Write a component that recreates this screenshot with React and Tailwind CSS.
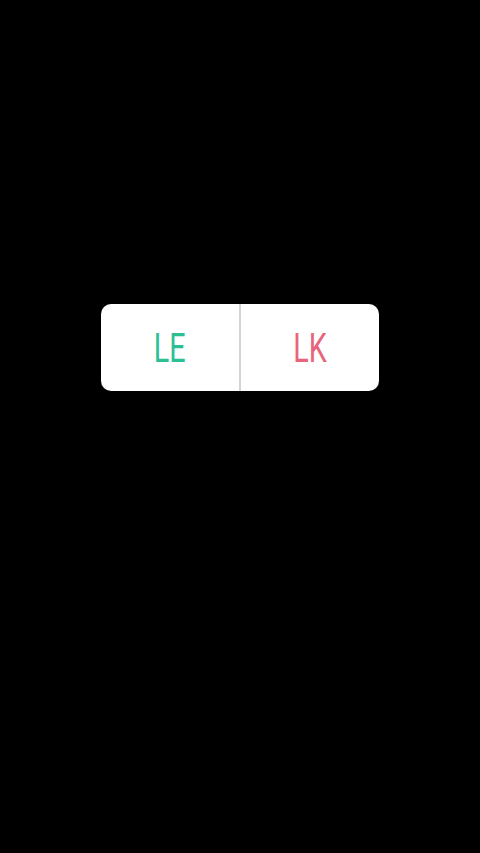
export default function App() {
  return (
    <div className="w-[480px] h-[853px] bg-black flex items-start justify-center pt-[304px]">
      <div className="w-[278px] h-[87px] bg-white rounded-[10px] flex overflow-hidden">
        <button className="flex-1 flex items-center justify-center pt-[2px]">
          <span className="text-[41px] font-normal leading-none text-[#2dbf94] scale-x-[0.7] font-['Roboto',sans-serif]">
            LE
          </span>
        </button>
        <div className="w-[2px] bg-[#d4d4d4]" />
        <button className="flex-1 flex items-center justify-center pt-[2px]">
          <span className="text-[41px] font-normal leading-none text-[#e8637d] scale-x-[0.7] font-['Roboto',sans-serif]">
            LK
          </span>
        </button>
      </div>
    </div>
  );
}
